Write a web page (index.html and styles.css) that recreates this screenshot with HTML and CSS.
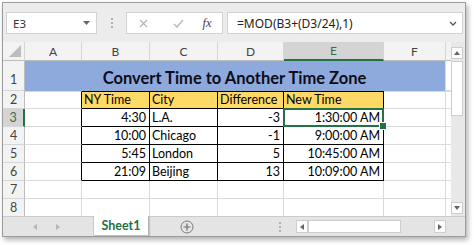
FILE: index.html
```html
<!DOCTYPE html>
<html lang="en">
<head>
    <meta charset="UTF-8">
    <title>Convert Time to Another Time Zone</title>
    <link rel="stylesheet" href="styles.css">
</head>
<body>
    <div class="window">
        <div class="formula-bar">
            <div class="name-box">
                <span>E3</span>
                <svg width="7" height="4" viewBox="0 0 7 4"><path d="M0 0h7L3.5 4z" fill="#666"/></svg>
            </div>
            <div class="fb-dots"><i></i><i></i><i></i></div>
            <div class="fb-buttons">
                <span class="fb-slot s1"><svg width="9" height="9" viewBox="0 0 9 9"><path d="M1 1l7 7M8 1L1 8" stroke="#b4b4b4" stroke-width="1.2" fill="none"/></svg></span>
                <span class="fb-slot s2"><svg width="11" height="9" viewBox="0 0 11 9"><path d="M1 5l3 3 6-7" stroke="#b4b4b4" stroke-width="1.2" fill="none"/></svg></span>
                <span class="fb-slot s3 fx">fx</span>
            </div>
            <div class="fb-input">
                <span>=MOD(B3+(D3/24),1)</span>
                <svg width="8" height="5" viewBox="0 0 8 5"><path d="M1 1l3 3 3-3" stroke="#555" stroke-width="1.3" fill="none"/></svg>
            </div>
        </div>

        <div class="body">
            <div class="sheet">
                <!-- column headers -->
                <div class="ch corner"><svg width="12" height="12" viewBox="0 0 12 12"><path d="M12 0v12H0z" fill="#bdbdbd"/></svg></div>
                <div class="ch">A</div>
                <div class="ch">B</div>
                <div class="ch">C</div>
                <div class="ch">D</div>
                <div class="ch ch-sel">E</div>
                <div class="ch">F</div>
                <div class="ch last"></div>

                <!-- row 1 -->
                <div class="rh row1">1</div>
                <div class="c title">Convert Time to Another Time Zone</div>
                <div class="c g"></div>

                <!-- row 2 -->
                <div class="rh">2</div>
                <div class="c top tl"></div>
                <div class="c top t y">NY Time</div>
                <div class="c top t y">City</div>
                <div class="c top t y">Difference</div>
                <div class="c top t y">New Time</div>
                <div class="c top"></div>
                <div class="c top g"></div>

                <!-- row 3 -->
                <div class="rh rh-sel">3</div>
                <div class="c tl"></div>
                <div class="c t r">4:30</div>
                <div class="c t">L.A.</div>
                <div class="c t r">-3</div>
                <div class="c t r sel">1:30:00 AM</div>
                <div class="c"></div>
                <div class="c g"></div>

                <!-- row 4 -->
                <div class="rh">4</div>
                <div class="c tl"></div>
                <div class="c t r">10:00</div>
                <div class="c t">Chicago</div>
                <div class="c t r">-1</div>
                <div class="c t r">9:00:00 AM</div>
                <div class="c"></div>
                <div class="c g"></div>

                <!-- row 5 -->
                <div class="rh">5</div>
                <div class="c tl"></div>
                <div class="c t r">5:45</div>
                <div class="c t">London</div>
                <div class="c t r">5</div>
                <div class="c t r">10:45:00 AM</div>
                <div class="c"></div>
                <div class="c g"></div>

                <!-- row 6 -->
                <div class="rh">6</div>
                <div class="c tl"></div>
                <div class="c t r">21:09</div>
                <div class="c t">Beijing</div>
                <div class="c t r">13</div>
                <div class="c t r">10:09:00 AM</div>
                <div class="c"></div>
                <div class="c g"></div>

                <!-- row 7 -->
                <div class="rh">7</div>
                <div class="c"></div>
                <div class="c"></div>
                <div class="c"></div>
                <div class="c"></div>
                <div class="c"></div>
                <div class="c"></div>
                <div class="c g"></div>

                <!-- row 8 -->
                <div class="rh">8</div>
                <div class="c"></div>
                <div class="c"></div>
                <div class="c"></div>
                <div class="c"></div>
                <div class="c"></div>
                <div class="c"></div>
                <div class="c g"></div>
            </div>

            <div class="vscroll">
                <div class="sb-btn"><svg width="6" height="4" viewBox="0 0 6 4"><path d="M0 4h6L3 0z" fill="#666"/></svg></div>
                <div class="vthumb"></div>
                <div class="sb-btn down"><svg width="6" height="4" viewBox="0 0 6 4"><path d="M0 0h6L3 4z" fill="#666"/></svg></div>
            </div>
        </div>

        <div class="tabbar">
            <div class="tab-nav">
                <svg width="4" height="6" viewBox="0 0 4 6"><path d="M4 0v6L0 3z" fill="#b5b5b5"/></svg>
                <svg width="4" height="6" viewBox="0 0 4 6"><path d="M0 0v6l4-3z" fill="#b5b5b5"/></svg>
            </div>
            <div class="tab">Sheet1</div>
            <div class="tab-add">
                <svg width="14" height="14" viewBox="0 0 14 14"><circle cx="7" cy="7" r="6" stroke="#7c7c7c" stroke-width="1" fill="none"/><path d="M7 3.5v7M3.5 7h7" stroke="#6c6c6c" stroke-width="1.2"/></svg>
            </div>
            <div class="tab-dots"><i></i><i></i><i></i></div>
            <div class="hscroll">
                <div class="sb-btn"><svg width="4" height="6" viewBox="0 0 4 6"><path d="M4 0v6L0 3z" fill="#666"/></svg></div>
                <div class="hthumb"></div>
                <div class="htrack"></div>
                <div class="sb-btn"><svg width="4" height="6" viewBox="0 0 4 6"><path d="M0 0v6l4-3z" fill="#666"/></svg></div>
            </div>
        </div>
    </div>
</body>
</html>
```

FILE: styles.css
```css
:root {
    --green: #217346;
    --grid: #dadada;
    --head: #f3f3f3;
    --head-line: #bdbdbd;
    --frame: #e8e8e8;
}

* {
    box-sizing: border-box;
    margin: 0;
    padding: 0;
}

body {
    font-family: 'Lato', sans-serif;
    background: #fff;
    width: 474px;
    height: 245px;
    overflow: hidden;
}

.window {
    margin: 2px 0 0 2px;
    width: 464px;
    height: 235px;
    border: 1px solid #9c9c9c;
    background: var(--frame);
    box-shadow: 2px 3px 5px rgba(0, 0, 0, 0.3);
    display: flex;
    flex-direction: column;
}

/* formula bar */
.formula-bar {
    height: 39px;
    flex: none;
    display: flex;
    align-items: center;
    padding: 1px 2px 0 3px;
    background: #ececec;
    font-family: 'Noto Sans', sans-serif;
    font-size: 11.5px;
    color: #333;
}

.name-box {
    width: 91px;
    height: 22px;
    background: #fff;
    border: 1px solid #d2d2d2;
    display: flex;
    align-items: center;
    justify-content: space-between;
    padding: 0 6px 0 6px;
}

.fb-dots,
.tab-dots {
    display: flex;
    flex-direction: column;
    align-items: center;
    gap: 2px;
}

.fb-dots {
    width: 29px;
}

.fb-dots i,
.tab-dots i {
    width: 2px;
    height: 2px;
    background: #b0b0b0;
}

.fb-buttons {
    width: 97px;
    height: 22px;
    background: #fff;
    border: 1px solid #d2d2d2;
    display: flex;
    align-items: center;
}

.fb-slot {
    display: flex;
    justify-content: center;
    align-items: center;
}

.s1 { width: 33px; }
.s2 { width: 36px; }
.s3 { width: 22px; }

.fx {
    font-family: 'Liberation Serif', serif;
    font-style: italic;
    font-size: 12.5px;
    color: #444;
}

.fb-input {
    flex: 1;
    height: 22px;
    margin-left: 4px;
    background: #fff;
    border: 1px solid #d2d2d2;
    display: flex;
    align-items: center;
    justify-content: space-between;
    padding: 0 5px 0 9px;
    font-size: 12px;
    color: #222;
}

/* grid area */
.body {
    height: 174px;
    flex: none;
    display: flex;
    overflow: hidden;
}

.sheet {
    width: 448px;
    display: grid;
    grid-template-columns: 22px 57px 68px 68px 66px 100px 62px 5px;
    grid-template-rows: 19px 30px repeat(7, 18px);
    background: #fff;
    overflow: hidden;
}

.ch {
    background: var(--head);
    border-right: 1px solid #d6d6d6;
    border-bottom: 1px solid var(--head-line);
    display: flex;
    align-items: center;
    justify-content: center;
    font-size: 12px;
    color: #444;
}

.ch.corner {
    justify-content: flex-end;
    align-items: flex-end;
    padding: 0 3px 3px 0;
}

.ch.last {
    border-right: none;
}

.ch-sel {
    background: #d4d4d4;
    border-bottom: 2px solid var(--green);
    color: #3d6b50;
}

.rh {
    background: var(--head);
    border-right: 1px solid var(--head-line);
    border-bottom: 1px solid #d6d6d6;
    display: flex;
    align-items: flex-end;
    justify-content: center;
    padding-bottom: 1px;
    font-size: 12.5px;
    color: #444;
}

.rh.row1 {
    padding-bottom: 3px;
}

.rh-sel {
    background: #d4d4d4;
    border-right: 2px solid var(--green);
    color: #3d6b50;
}

.c {
    border-right: 1px solid var(--grid);
    border-bottom: 1px solid var(--grid);
    display: flex;
    align-items: flex-end;
    padding: 0 3px 1px 2px;
    font-size: 12.5px;
    color: #000;
    white-space: nowrap;
}

.c.g {
    border-right: none;
}

.c.r {
    justify-content: flex-end;
}

.c.top {
    border-top: 1px solid var(--grid);
}

.c.t {
    border-right-color: #000;
    border-bottom-color: #000;
}

.c.top.t {
    border-top-color: #000;
}

.c.tl {
    border-right-color: #000;
}

.c.y {
    background: #ffd966;
}

.title {
    grid-column: 2 / 8;
    background: #8ea9db;
    border-bottom: none;
    justify-content: center;
    padding-bottom: 3px;
    font-size: 16.5px;
    font-weight: 700;
    color: #0d0d1a;
}

.sel {
    position: relative;
}

.sel::after {
    content: '';
    position: absolute;
    left: -1px;
    top: -1px;
    right: -1px;
    bottom: -1px;
    border: 2px solid var(--green);
}

.sel::before {
    content: '';
    position: absolute;
    right: -4px;
    bottom: -4px;
    width: 6px;
    height: 6px;
    background: var(--green);
    border: 1px solid #fff;
    z-index: 2;
}

/* scroll bars */
.vscroll {
    width: 14px;
    display: flex;
    flex-direction: column;
    padding-top: 5px;
    background: var(--frame);
}

.sb-btn {
    width: 12px;
    height: 12px;
    flex: none;
    background: #fcfcfc;
    border: 1px solid #cdcdcd;
    display: flex;
    align-items: center;
    justify-content: center;
}

.vthumb {
    width: 12px;
    height: 55px;
    margin-top: 2px;
    background: #fff;
    border: 1px solid #cdcdcd;
}

.vscroll .down {
    margin-top: auto;
    margin-bottom: 2px;
}

/* sheet tabs */
.tabbar {
    flex: 1;
    display: flex;
    align-items: stretch;
    background: #e4e4e4;
    border-top: 1px solid #cbcbcb;
}

.tab-nav {
    width: 90px;
    display: flex;
    align-items: center;
    justify-content: center;
    gap: 19px;
    padding-right: 4px;
}

.tab {
    width: 56px;
    margin: -1px 0 1px;
    background: #fff;
    border-left: 1px solid #c6c6c6;
    border-right: 1px solid #b4b4b4;
    box-shadow: 1px 1px 1px rgba(0, 0, 0, 0.15);
    display: flex;
    align-items: center;
    justify-content: center;
    font-size: 12.5px;
    font-weight: 700;
    color: var(--green);
}

.tab-add {
    width: 76px;
    display: flex;
    align-items: center;
    justify-content: center;
}

.tab-dots {
    width: 8px;
    margin-left: 51px;
    justify-content: center;
}

.hscroll {
    margin-left: 12px;
    display: flex;
    align-items: center;
}

.hscroll .sb-btn {
    height: 13px;
}

.hthumb {
    width: 93px;
    height: 13px;
    background: #fff;
    border: 1px solid #cdcdcd;
}

.htrack {
    width: 33px;
}
```
